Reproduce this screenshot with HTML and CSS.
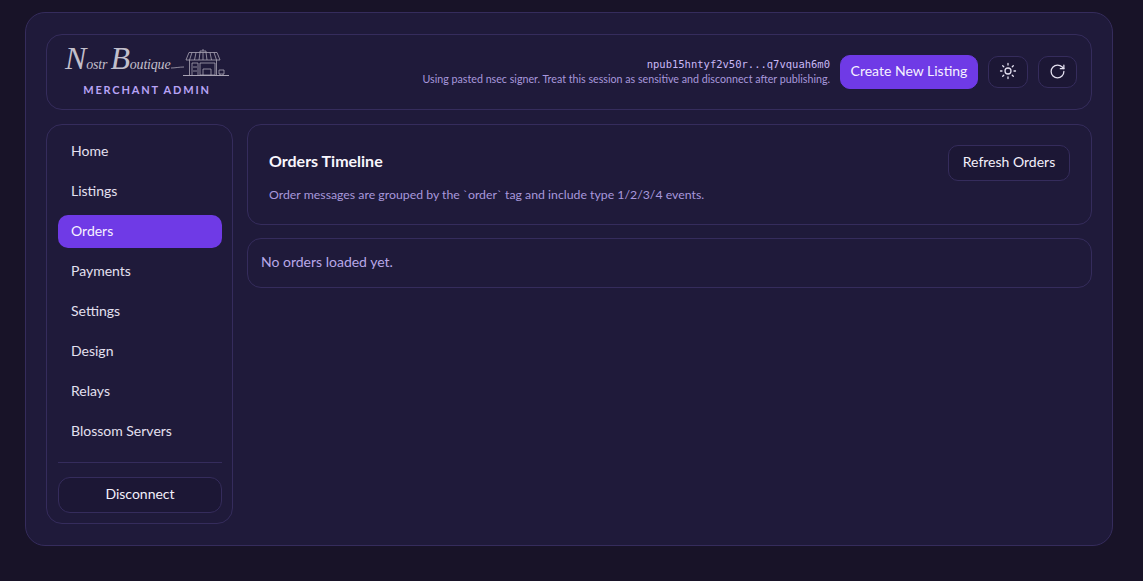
FILE: index.html
```html
<!DOCTYPE html>
<html lang="en">
<head>
<meta charset="utf-8">
<title>Merchant Admin</title>
<link rel="stylesheet" href="styles.css">
</head>
<body>
<div class="shell">
  <header class="topbar">
    <div class="brand">
      <div class="logo">
        <span class="logo-text"><span class="logo-cap">N</span>ostr <span class="logo-cap">B</span>outique</span>
        <svg class="logo-shop" width="58" height="29" viewBox="0 0 58 29" fill="none" stroke="#a9a4b4" stroke-width="0.8">
          <path d="M0 20c4 0 8-1 13-1"/>
          <path d="M12 27.500H58" stroke-width="1"/>
          <path d="M29 4.500V3h6v1.500M32 3V1"/>
          <path d="M18 4.500h28l3 7.500H15z"/>
          <path d="M21 4.500l-2.500 7.500M25 4.500l-1.500 7.500M29 4.500l-1 7.500M32 4.500v7.500M35 4.500l1 7.500M39 4.500l1.500 7.500M43 4.500l2.500 7.500"/>
          <path d="M18.500 12v15.500M45.500 12v15.500"/>
          <path d="M21 15h6v12.500h-6zM22 19h4M22 23h4"/>
          <path d="M29 15h15v12H29z"/>
          <path d="M32 21h8v6.500h-8z"/>
          <path d="M48 22h5v4h-5zM49 26v1.500M52 26v1.500"/>
        </svg>
      </div>
      <div class="brand-sub">MERCHANT ADMIN</div>
    </div>
    <div class="top-actions">
      <div class="identity">
        <div class="npub">npub15hntyf2v50r...q7vquah6m0</div>
        <div class="signer">Using pasted nsec signer. Treat this session as sensitive and disconnect after publishing.</div>
      </div>
      <button class="btn btn-primary">Create New Listing</button>
      <button class="btn btn-icon" aria-label="Toggle theme">
        <svg width="18" height="18" viewBox="0 0 24 24" fill="none" stroke="currentColor" stroke-width="1.700" stroke-linecap="round">
          <circle cx="12" cy="12" r="4"/>
          <path d="M12 2v2M12 20v2M4.930 4.930l1.410 1.410M17.660 17.660l1.410 1.410M2 12h2M20 12h2M6.340 17.660l-1.410 1.410M19.070 4.930l-1.410 1.410"/>
        </svg>
      </button>
      <button class="btn btn-icon" aria-label="Refresh">
        <svg width="17" height="17" viewBox="0 0 24 24" fill="none" stroke="currentColor" stroke-width="1.800" stroke-linecap="round" stroke-linejoin="round">
          <path d="M21 12a9 9 0 1 1-9-9c2.520 0 4.930 1 6.740 2.740L21 8"/>
          <path d="M21 3v5h-5"/>
        </svg>
      </button>
    </div>
  </header>
  <div class="body">
    <nav class="sidebar">
      <ul class="nav">
        <li class="nav-item">Home</li>
        <li class="nav-item">Listings</li>
        <li class="nav-item is-active">Orders</li>
        <li class="nav-item">Payments</li>
        <li class="nav-item">Settings</li>
        <li class="nav-item">Design</li>
        <li class="nav-item">Relays</li>
        <li class="nav-item">Blossom Servers</li>
      </ul>
      <div class="side-foot">
        <button class="btn btn-disconnect">Disconnect</button>
      </div>
    </nav>
    <main class="content">
      <section class="card card-head">
        <div class="card-row">
          <h1 class="title">Orders Timeline</h1>
          <button class="btn btn-refresh">Refresh Orders</button>
        </div>
        <p class="desc">Order messages are grouped by the `order` tag and include type 1/2/3/4 events.</p>
      </section>
      <section class="card card-empty">No orders loaded yet.</section>
    </main>
  </div>
</div>
</body>
</html>
```
FILE: styles.css
```css
* { box-sizing: border-box; }
html, body { margin: 0; height: 100%; }
body {
  background: #181328;
  font-family: "Lato", "Noto Sans", sans-serif;
  color: #f3f0fb;
  padding: 12px 30px 35px 25px;
  overflow: hidden;
}
.shell {
  height: 534px;
  background: #1f1a3a;
  border: 1px solid #352c5c;
  border-radius: 20px;
  padding: 21px 20px 21px;
  display: flex;
  flex-direction: column;
  gap: 14px;
}
.topbar {
  height: 76px;
  flex: none;
  border: 1px solid #352c5c;
  border-radius: 16px;
  padding: 0 14px 0 18px;
  display: flex;
  align-items: center;
  justify-content: space-between;
}
.brand { width: 164px; padding-top: 1px; display: flex; flex-direction: column; align-items: center; }
.logo { display: flex; align-items: flex-end; height: 29px; width: 164px; }
.logo-text {
  flex: none;
  width: 106px;
  font-family: "Liberation Serif", serif;
  font-style: italic;
  font-size: 14px;
  letter-spacing: -0.200px;
  line-height: 25px;
  color: #c2bfcb;
  white-space: nowrap;
}
.logo-cap { font-size: 32px; line-height: 25px; }
.logo-shop { flex: none; }
.brand-sub {
  font-size: 11px;
  font-weight: 700;
  letter-spacing: 1.800px;
  color: #b8a3f5;
  line-height: 14px;
  margin-top: 6px;
}
.top-actions { display: flex; align-items: center; gap: 10px; }
.identity { text-align: right; padding-bottom: 2px; }
.npub { font-family: "DejaVu Sans Mono", monospace; font-size: 10.500px; line-height: 14px; color: #c9b8f7; }
.signer { font-size: 10.700px; line-height: 14px; color: #a898dc; margin-top: 1px; }
.btn {
  font-family: inherit;
  font-size: 14px;
  color: #f3f0fb;
  background: #1c1735;
  border: 1px solid #352c5c;
  border-radius: 10px;
  cursor: pointer;
}
.btn-primary { height: 34px; width: 138px; background: #6f3ae6; border-color: #6f3ae6; color: #f6f2ff; padding: 0 0 4px; }
.btn-icon { width: 39.500px; height: 32px; padding: 0 0 2px; display: flex; align-items: center; justify-content: center; color: #e4e0f0; }
.body { flex: 1; display: flex; gap: 14px; min-height: 0; }
.sidebar {
  width: 187px;
  border: 1px solid #352c5c;
  border-radius: 16px;
  padding: 10px 10px 10px 11px;
  display: flex;
  flex-direction: column;
}
.nav { list-style: none; margin: 0; padding: 0; display: flex; flex-direction: column; gap: 7px; }
.nav-item {
  height: 33px;
  line-height: 31px;
  padding: 0 13px;
  border-radius: 10px;
  font-size: 14px;
  color: #e4e0f0;
}
.nav-item.is-active { background: #6f3ae6; color: #f6f2ff; }
.side-foot { margin-top: 14px; border-top: 1px solid #352c5c; padding-top: 14px; }
.btn-disconnect { width: 100%; height: 36px; border-radius: 12px; padding: 0 0 4px; }
.content { flex: 1; display: flex; flex-direction: column; gap: 13px; min-width: 0; }
.card { border: 1px solid #352c5c; border-radius: 14px; }
.card-head { height: 101px; padding: 20px 21px; }
.card-row { display: flex; justify-content: space-between; align-items: center; }
.title { margin: 0 0 6px; font-size: 16px; font-weight: 700; color: #f8f6fd; }
.btn-refresh { width: 122px; height: 36px; padding: 0 0 4px; }
.desc { margin: 6px 0 0; font-size: 12.300px; line-height: 16px; color: #a898dc; }
.card-empty { height: 50px; line-height: 45px; padding: 0 13px; font-size: 14px; color: #b8a8e8; }
```
